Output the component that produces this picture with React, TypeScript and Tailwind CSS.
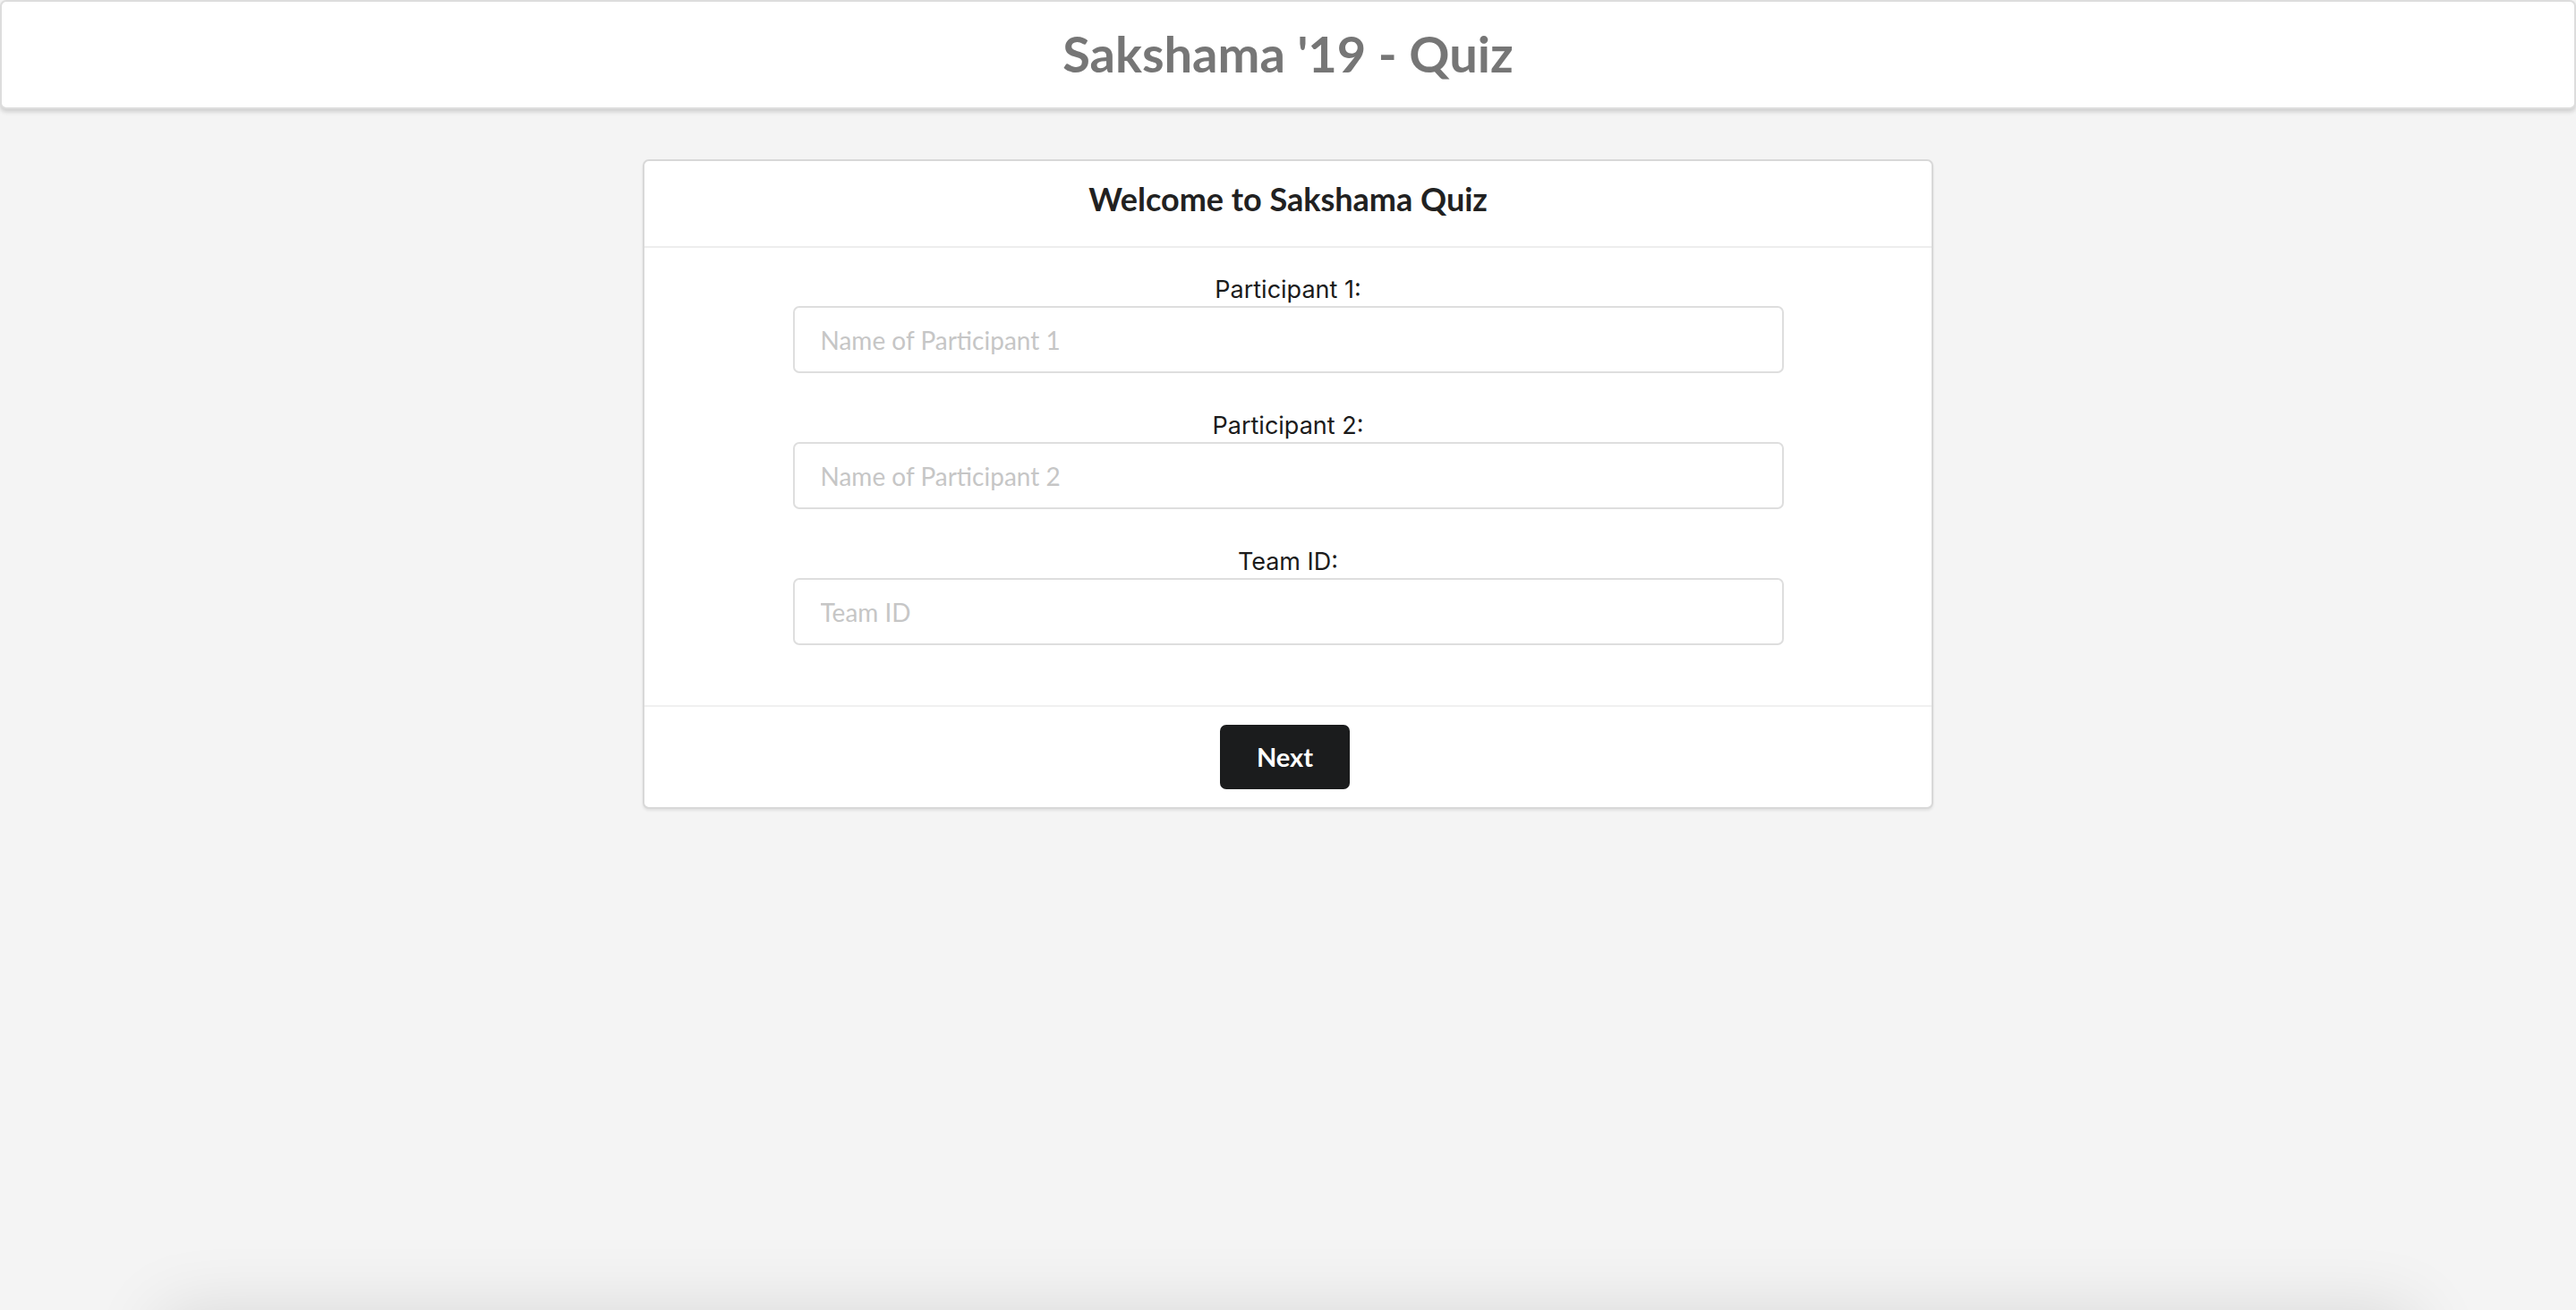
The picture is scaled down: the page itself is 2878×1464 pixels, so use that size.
import React from "react";

const lato = { fontFamily: "Lato, 'Noto Sans', sans-serif" };

function Field({ label, placeholder }: { label: string; placeholder: string }) {
  return (
    <div className="flex flex-col items-center">
      <label
        className="block text-[27px] leading-[32px] text-[#1b1b1b] mb-[2px] font-['Inter',sans-serif]"
      >
        {label}
      </label>
      <input
        type="text"
        placeholder={placeholder}
        className="w-[1107px] h-[75px] rounded-[7px] border-2 border-[#dedede] bg-white px-[29px] text-[28px] text-[#222] placeholder:text-[#c6c6c6] outline-none font-['Lato',sans-serif]"
      />
    </div>
  );
}

export default function App() {
  return (
    <div className="h-screen w-full overflow-hidden bg-[#f4f4f4]" style={lato}>
      <header className="h-[122px] bg-white border-2 border-[#dddddd] rounded-[7px] shadow-[0_3px_5px_rgba(0,0,0,0.16)] flex items-center justify-center">
        <h1 className="text-[56px] font-bold text-[#767676] leading-none pb-[2px] font-['Lato',sans-serif]">
          Sakshama '19 - Quiz
        </h1>
      </header>

      <main className="mt-[56px] w-[1442px] mx-auto bg-white border-2 border-[#d8d8d8] rounded-[7px] shadow-[0_2px_3px_rgba(0,0,0,0.08)]">
        <div className="pt-[20px] pb-[31px] border-b-2 border-[#ededed] text-center">
          <h2 className="text-[36px] leading-[44px] font-bold text-[#212121] font-['Lato',sans-serif]">
            Welcome to Sakshama Quiz
          </h2>
        </div>

        <form className="pt-[31px] pb-[67px] flex flex-col gap-[43px]">
          <Field label="Participant 1:" placeholder="Name of Participant 1" />
          <Field label="Participant 2:" placeholder="Name of Participant 2" />
          <Field label="Team ID:" placeholder="Team ID" />
        </form>

        <div className="border-t-2 border-[#f0f0f0] pt-[20px] pb-[20px] flex justify-center">
          <button
            type="button"
            className="w-[145px] h-[72px] mr-[7px] rounded-[7px] bg-[#1b1c1d] text-white text-[29px] font-bold font-['Lato',sans-serif]"
          >
            Next
          </button>
        </div>
      </main>

      <div className="mt-[562px] mx-[180px] h-[120px] bg-[#f4f4f4] shadow-[0_0_80px_rgba(0,0,0,0.12)]" />
    </div>
  );
}
